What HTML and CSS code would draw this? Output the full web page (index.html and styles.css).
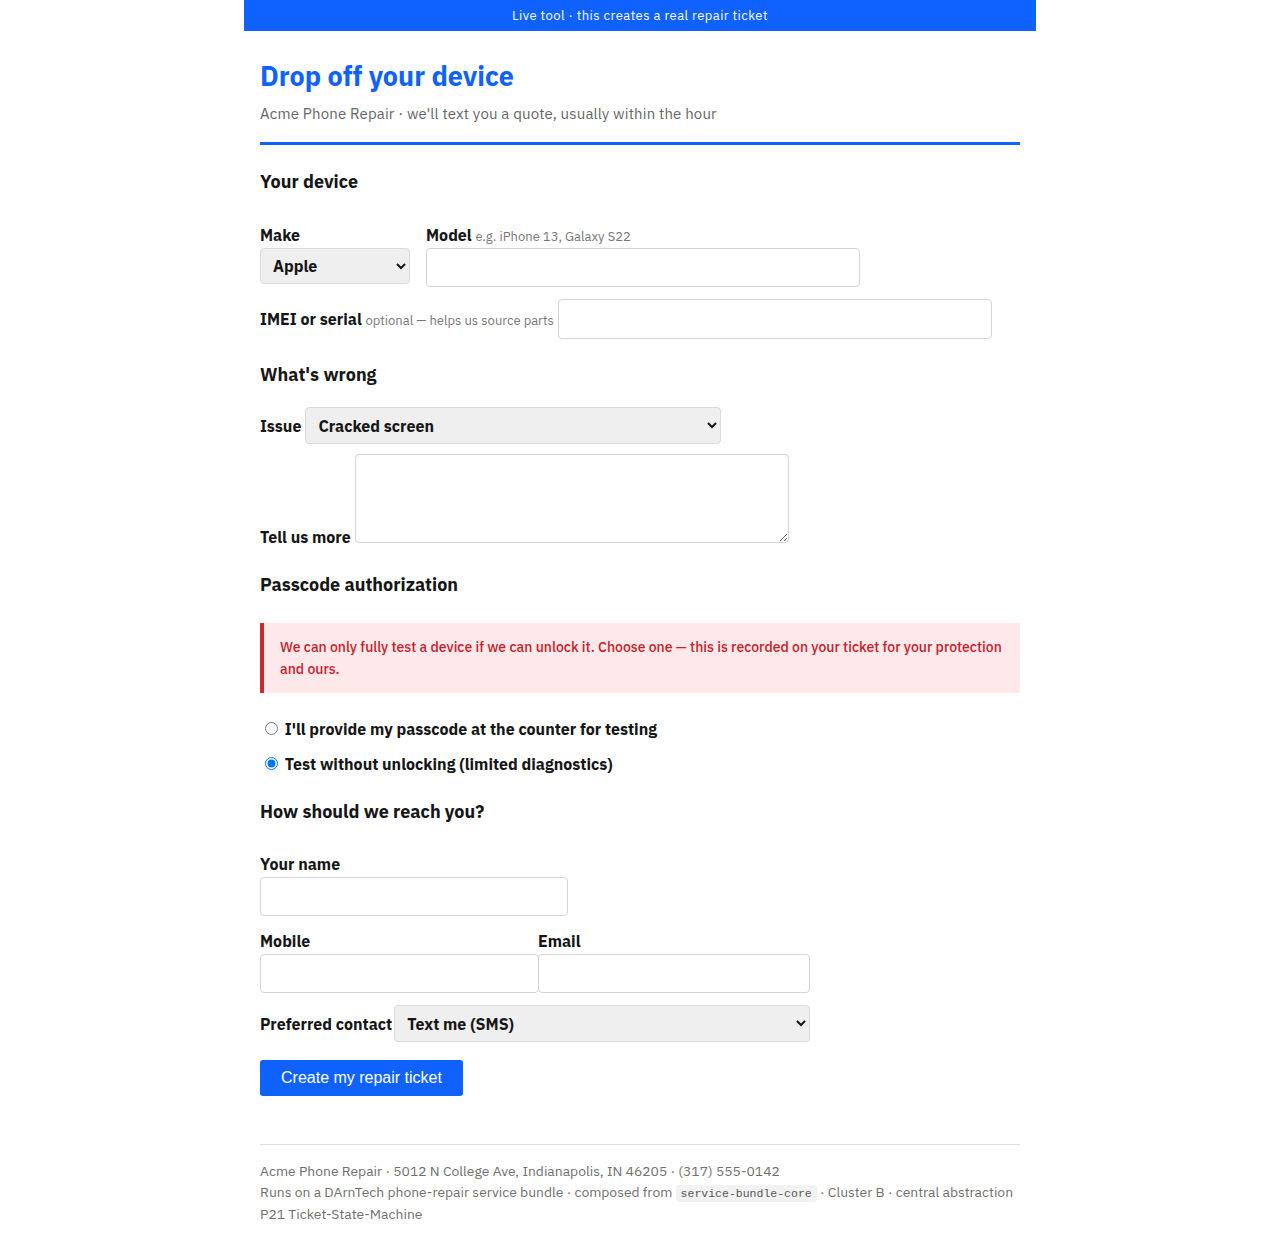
FILE: index.html
```html
<!DOCTYPE html>
<html lang="en">
<head>
    <meta charset="UTF-8">
    <meta name="viewport" content="width=device-width, initial-scale=1.0">
    <title>Drop off your device · Acme Phone Repair</title>
    <link rel="stylesheet" href="styles.css">
</head>
<body>
    <div class="page">
        <div class="banner">Live tool · this creates a real repair ticket</div>

        <div class="content">
            <header class="intro">
                <h1>Drop off your device</h1>
                <p class="subtitle">Acme Phone Repair · we'll text you a quote, usually within the hour</p>
            </header>

            <form id="ticket-form" onsubmit="return false;">
                <!-- Device details -->
                <h2 class="device-title">Your device</h2>
                <div class="pair-row">
                    <div class="field">
                        <label for="make">Make</label>
                        <select id="make" class="make-select">
                            <option>Apple</option>
                            <option>Samsung</option>
                            <option>Google</option>
                            <option>Motorola</option>
                            <option>Other</option>
                        </select>
                    </div>
                    <div class="field">
                        <label for="model">Model <span class="hint">e.g. iPhone 13, Galaxy S22</span></label>
                        <input type="text" id="model" class="wide-input model-input">
                    </div>
                </div>
                <div class="inline-row imei-row">
                    <label for="imei">IMEI or serial <span class="hint">optional — helps us source parts</span></label>
                    <input type="text" id="imei" class="wide-input">
                </div>

                <!-- Problem description -->
                <h2 class="problem-title">What's wrong</h2>
                <div class="inline-row issue-row">
                    <label for="issue">Issue</label>
                    <select id="issue" class="wide-select">
                        <option>Cracked screen</option>
                        <option>Battery drains fast</option>
                        <option>Won't charge</option>
                        <option>Water damage</option>
                        <option>Something else</option>
                    </select>
                </div>
                <div class="inline-row more-row">
                    <label for="details">Tell us more</label>
                    <textarea id="details"></textarea>
                </div>

                <!-- Passcode consent -->
                <h2 class="passcode-title">Passcode authorization</h2>
                <div class="alert">We can only fully test a device if we can unlock it. Choose one — this is recorded on your ticket for your protection and ours.</div>
                <label class="radio first-radio"><input type="radio" name="passcode" value="provide"> I'll provide my passcode at the counter for testing</label>
                <label class="radio"><input type="radio" name="passcode" value="locked" checked> Test without unlocking (limited diagnostics)</label>

                <!-- Contact details -->
                <h2 class="contact-title">How should we reach you?</h2>
                <div class="field name-field">
                    <label for="name">Your name</label>
                    <input type="text" id="name" class="name-input">
                </div>
                <div class="pair-row contact-row">
                    <div class="field">
                        <label for="mobile">Mobile</label>
                        <input type="tel" id="mobile" class="mobile-input">
                    </div>
                    <div class="field">
                        <label for="email">Email</label>
                        <input type="email" id="email" class="email-input">
                    </div>
                </div>
                <div class="inline-row preferred-row">
                    <label for="preferred">Preferred contact</label>
                    <select id="preferred" class="wide-select">
                        <option>Text me (SMS)</option>
                        <option>Call me</option>
                        <option>Email me</option>
                    </select>
                </div>

                <button type="submit" class="submit-btn">Create my repair ticket</button>
            </form>

            <footer class="footer">
                Acme Phone Repair · 5012 N College Ave, Indianapolis, IN 46205 · (317) 555-0142<br>
                Runs on a DArnTech phone-repair service bundle · composed from <code>service-bundle-core</code> · Cluster B · central abstraction P21 Ticket-State-Machine
            </footer>
        </div>
    </div>
</body>
</html>
```

FILE: styles.css
```css
body {
    margin: 0;
    font-family: 'IBM Plex Sans', Roboto, 'Noto Sans', sans-serif;
    color: #161616;
    background-color: #fff;
}
.page {
    width: 792px;
    margin: 0 auto;
    padding-bottom: 16px;
}
.banner {
    background-color: #0f62fe;
    color: #fff;
    height: 31px;
    line-height: 31px;
    font-size: 13px;
    letter-spacing: 0.45px;
    text-align: center;
}
.content {
    padding: 0 16px;
}

/* Header */
.intro {
    border-bottom: 3px solid #0f62fe;
    padding-bottom: 17px;
}
h1 {
    color: #0f62fe;
    font-size: 27px;
    line-height: 34px;
    margin: 28px 0 0;
}
.subtitle {
    color: #666;
    font-size: 15px;
    letter-spacing: 0.15px;
    line-height: 22px;
    margin: 10px 0 0;
}

h2 {
    font-size: 18px;
    line-height: 24px;
    margin: 0;
}
.device-title {
    margin-top: 25px;
}
.problem-title {
    margin-top: 24px;
}
.passcode-title {
    margin-top: 30px;
}
.contact-title {
    margin-top: 25px;
}

label {
    font-size: 16px;
    font-weight: bold;
    line-height: 20px;
}
.hint {
    font-size: 13px;
    font-weight: normal;
    color: #777;
    line-height: 1;
}

/* Form controls */
input[type="text"], input[type="tel"], input[type="email"], textarea {
    box-sizing: border-box;
    height: 39px;
    border: 1px solid #d4d4d4;
    border-radius: 4px;
    padding: 8px 10px;
    font-family: inherit;
    font-size: 15px;
    margin: 0;
}
select {
    box-sizing: border-box;
    height: 37px;
    border: 1px solid #dadada;
    border-radius: 4px;
    background-color: #efefef;
    padding: 0 8px;
    font-family: inherit;
    font-size: 16px;
    font-weight: bold;
    color: #161616;
    margin: 0;
}

.field label {
    display: block;
    height: 20px;
    margin-bottom: 3px;
}
.pair-row {
    display: flex;
    gap: 16px;
    margin-top: 31px;
}
.make-select {
    width: 150px;
    height: 36px;
}
.wide-input {
    width: 434px;
}
.model-input {
    height: 38px;
}

.inline-row {
    display: flex;
    align-items: center;
    gap: 4px;
}
.imei-row {
    margin-top: 12px;
}
.imei-row input {
    height: 40px;
}
.issue-row {
    margin-top: 20px;
}
.wide-select {
    width: 416px;
}
.more-row {
    margin-top: 10px;
    align-items: flex-end;
}
.more-row label {
    margin-bottom: -4px;
}
textarea {
    width: 434px;
    height: 89px;
    resize: vertical;
}

/* Passcode section */
.alert {
    margin-top: 26px;
    background-color: #ffe8ea;
    border-left: 4px solid #cf2a2a;
    color: #c4212a;
    font-size: 14px;
    font-weight: 500;
    line-height: 22px;
    padding: 13px 16px;
}
.radio {
    display: block;
    line-height: 22px;
    margin-top: 13px;
}
.first-radio {
    margin-top: 25px;
}
.radio input {
    margin: 3px 3px 0 5px;
}

/* Contact section */
.name-field {
    margin-top: 30px;
}
.name-input {
    width: 308px;
    height: 40px;
}
.contact-row {
    gap: 0;
    margin-top: 15px;
}
.mobile-input {
    width: 279px;
    margin-right: -1px !important;
}
.email-input {
    width: 272px;
}
.preferred-row {
    margin-top: 12px;
}
.preferred-row label {
    margin-right: -2px;
}

.submit-btn {
    display: block;
    margin-top: 18px;
    height: 36px;
    padding: 0 21px;
    background-color: #0f62fe;
    color: #fff;
    border: none;
    border-radius: 3px;
    font-family: 'Liberation Sans', Arial, sans-serif;
    font-size: 16px;
    cursor: pointer;
}
.submit-btn:hover {
    background-color: #0043ce;
}

/* Footer */
.footer {
    margin-top: 48px;
    border-top: 1px solid #ddd;
    padding-top: 16px;
    color: #6f6f6f;
    font-size: 13.9px;
    line-height: 21px;
}
.footer code {
    font-family: 'Liberation Mono', 'DejaVu Sans Mono', monospace;
    font-size: 11.5px;
    color: #555;
    background-color: #f2f2f2;
    padding: 2px 5px;
    border-radius: 3px;
}
```
